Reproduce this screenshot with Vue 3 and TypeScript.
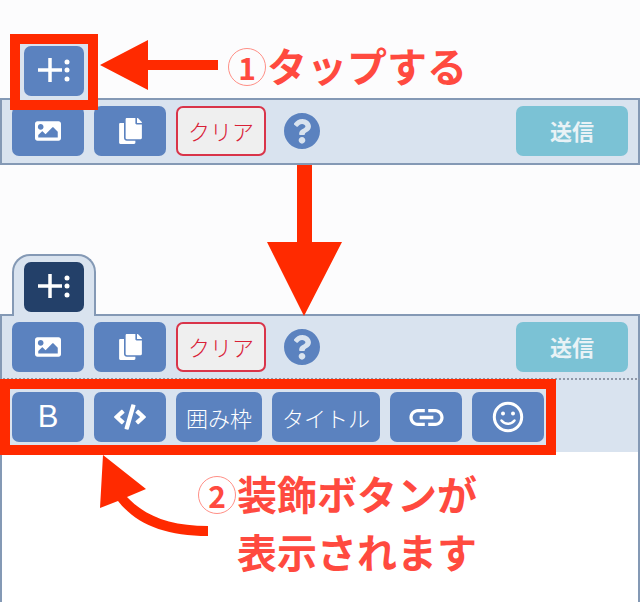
<script setup lang="ts">
interface Tool {
  label?: string
  icon?: string
  bold?: boolean
}

const imagePath = 'M464 448H48c-26.51 0-48-21.49-48-48V112c0-26.51 21.49-48 48-48h416c26.51 0 48 21.49 48 48v288c0 26.51-21.49 48-48 48zM112 120c-30.928 0-56 25.072-56 56s25.072 56 56 56 56-25.072 56-56-25.072-56-56-56zM64 384h384V272l-87.515-87.515c-4.686-4.686-12.284-4.686-16.971 0L208 320l-55.515-55.515c-4.686-4.686-12.284-4.686-16.971 0L64 336v48z'
const copyPath = 'M320 448v40c0 13.255-10.745 24-24 24H24c-13.255 0-24-10.745-24-24V120c0-13.255 10.745-24 24-24h72v296c0 30.879 25.121 56 56 56h168zm0-344V0H152c-13.255 0-24 10.745-24 24v368c0 13.255 10.745 24 24 24h272c13.255 0 24-10.745 24-24V128H344c-13.2 0-24-10.8-24-24zm120.971-31.029L375.029 7.029A24 24 0 0 0 358.059 0H352v96h96v-6.059a24 24 0 0 0-7.029-16.97z'
const helpPath = 'M504 256c0 136.997-111.043 248-248 248S8 392.997 8 256C8 119.083 119.043 8 256 8s248 111.083 248 248zM262.655 90c-54.497 0-89.255 22.957-116.549 63.758-3.536 5.286-2.353 12.415 2.715 16.258l34.699 26.31c5.205 3.947 12.621 3.008 16.665-2.122 17.864-22.658 30.113-35.797 57.303-35.797 20.429 0 45.698 13.148 45.698 32.958 0 14.976-12.363 22.667-32.534 33.976C247.128 238.528 216 254.941 216 296v4c0 6.627 5.373 12 12 12h56c6.627 0 12-5.373 12-12v-1.333c0-28.462 83.186-29.647 83.186-106.667 0-58.002-60.165-102-116.531-102zM256 338c-25.365 0-46 20.635-46 46 0 25.364 20.635 46 46 46s46-20.636 46-46c0-25.365-20.635-46-46-46z'
const codePath = 'M278.9 511.5l-61-17.7c-6.4-1.8-10-8.5-8.2-14.9L346.2 8.7c1.8-6.4 8.5-10 14.9-8.2l61 17.7c6.4 1.8 10 8.5 8.2 14.9L293.8 503.3c-1.9 6.4-8.5 10.1-14.9 8.2zm-114-112.2l43.5-46.4c4.6-4.9 4.3-12.7-.8-17.2L117 256l90.6-79.7c5.1-4.5 5.5-12.3.8-17.2l-43.5-46.4c-4.5-4.8-12.1-5.1-17-.5L3.8 247.2c-5.1 4.7-5.1 12.8 0 17.5l144.1 135.1c4.9 4.6 12.5 4.4 17-.5zm327.2.6l144.1-135.1c5.1-4.7 5.1-12.8 0-17.5L492.1 112.1c-4.8-4.5-12.4-4.3-17 .5L431.6 159c-4.6 4.9-4.3 12.7.8 17.2L523 256l-90.6 79.7c-5.1 4.5-5.5 12.3-.8 17.2l43.5 46.4c4.5 4.9 12.1 5.1 17 .6z'
const linkPath = 'M3.9 12c0-1.71 1.39-3.1 3.1-3.1h4V7H7c-2.76 0-5 2.24-5 5s2.24 5 5 5h4v-1.9H7c-1.71 0-3.1-1.39-3.1-3.1zM8 13h8v-2H8v2zm9-6h-4v1.9h4c1.71 0 3.1 1.39 3.1 3.1s-1.39 3.1-3.1 3.1h-4V17h4c2.76 0 5-2.24 5-5s-2.24-5-5-5z'

const decorations: Tool[] = [
  { label: 'B', bold: true },
  { icon: 'code' },
  { label: '囲み枠' },
  { label: 'タイトル' },
  { icon: 'link' },
  { icon: 'smile' },
]
</script>

<template>
  <div class="page">
    <section class="composer first">
      <div class="tab">
        <button type="button" class="btn plus">
          <svg width="36" height="34" viewBox="0 -2 36 34" fill="#fff">
            <rect x="2" y="12.25" width="24" height="3.5" />
            <rect x="12.25" y="2" width="3.5" height="24" />
            <circle cx="31" cy="6" r="2.5" />
            <circle cx="31" cy="14" r="2.5" />
            <circle cx="31" cy="23" r="2.5" />
          </svg>
        </button>
      </div>
      <div class="toolbar closed">
        <button type="button" class="btn">
          <svg width="26" height="26" viewBox="0 0 512 512" fill="#fff"><path :d="imagePath" /></svg>
        </button>
        <button type="button" class="btn">
          <svg width="23" height="26" viewBox="0 0 448 512" fill="#fff"><path :d="copyPath" /></svg>
        </button>
        <button type="button" class="btn clear">クリア</button>
        <svg class="help" width="36" height="36" viewBox="8 8 496 496" fill="#5b82bf"><path :d="helpPath" /></svg>
        <button type="button" class="btn send">送信</button>
      </div>
    </section>

    <section class="composer second">
      <div class="tab">
        <button type="button" class="btn plus active">
          <svg width="36" height="34" viewBox="0 -2 36 34" fill="#fff">
            <rect x="2" y="12.25" width="24" height="3.5" />
            <rect x="12.25" y="2" width="3.5" height="24" />
            <circle cx="31" cy="6" r="2.5" />
            <circle cx="31" cy="14" r="2.5" />
            <circle cx="31" cy="23" r="2.5" />
          </svg>
        </button>
      </div>
      <div class="toolbar">
        <button type="button" class="btn">
          <svg width="26" height="26" viewBox="0 0 512 512" fill="#fff"><path :d="imagePath" /></svg>
        </button>
        <button type="button" class="btn">
          <svg width="23" height="26" viewBox="0 0 448 512" fill="#fff"><path :d="copyPath" /></svg>
        </button>
        <button type="button" class="btn clear">クリア</button>
        <svg class="help" width="36" height="36" viewBox="8 8 496 496" fill="#5b82bf"><path :d="helpPath" /></svg>
        <button type="button" class="btn send">送信</button>
      </div>
      <div class="decorations">
        <button
          v-for="(tool, i) in decorations"
          :key="i"
          type="button"
          class="btn"
          :class="{ wide: tool.label && !tool.bold, letter: tool.bold }"
        >
          <template v-if="tool.label">{{ tool.label }}</template>
          <svg v-else-if="tool.icon === 'code'" width="32" height="26" viewBox="0 0 640 512" fill="#fff"><path :d="codePath" /></svg>
          <svg v-else-if="tool.icon === 'link'" width="41" height="41" viewBox="0 0 24 24" fill="#fff"><path :d="linkPath" /></svg>
          <svg v-else width="32" height="32" viewBox="0 0 32 32" fill="none" stroke="#fff">
            <circle cx="16" cy="16" r="13.7" stroke-width="3" />
            <circle cx="11" cy="12.5" r="2" fill="#fff" stroke="none" />
            <circle cx="21" cy="12.5" r="2" fill="#fff" stroke="none" />
            <path d="M9.5 19.5c3.5 4.4 9.5 4.4 13 0" stroke-width="2.4" stroke-linecap="round" />
          </svg>
        </button>
      </div>
      <div class="editor"></div>
    </section>

    <div class="frame frame-tap"></div>
    <div class="frame frame-tools"></div>

    <svg class="arrows" width="640" height="602" viewBox="0 0 640 602" fill="#ff2a00">
      <path d="M100 65 148 40V60H218V70H148V90Z" />
      <path d="M297 165H312V242H342L304 316 267 242H297Z" />
      <path d="M103 455 146 489 127 497C145 516 170 526 208 526V536C165 536 136 524 118 501L100 508Z" />
    </svg>

    <p class="note note-tap"><span class="num">1</span>タップする</p>
    <p class="note note-show"><span class="num">2</span>装飾ボタンが<br /><span class="indent">表示されます</span></p>
  </div>
</template>

<style scoped>
.page {
  position: relative;
  display: flex;
  flex-direction: column;
  width: 640px;
  height: 602px;
  overflow: hidden;
  background: #fcfcfd;
  font-family: "Noto Sans CJK JP", "Noto Sans", sans-serif;
}

.composer.first {
  padding-top: 38px;
}

.composer.second {
  display: flex;
  flex: 1;
  flex-direction: column;
  margin-top: 89px;
}

.tab {
  position: relative;
  z-index: 1;
  box-sizing: border-box;
  width: 84px;
  height: 62px;
  margin: 0 0 -2px 12px;
  padding: 6px 10px 0;
  background: #d9e3ef;
  border: 2px solid #8499b5;
  border-bottom: none;
  border-radius: 18px 18px 0 0;
}

.toolbar {
  display: flex;
  gap: 10px;
  align-items: center;
  padding: 6px 10px;
  background: #d9e3ef;
  border: 2px solid #8499b5;
  border-bottom: 2px dotted #8f98a8;
}

.toolbar.closed {
  padding-bottom: 7px;
  border-bottom: 2px solid #8499b5;
}

.decorations {
  display: flex;
  gap: 10px;
  padding: 12px 10px 10px;
  background: #d9e3ef;
  border: solid #8499b5;
  border-width: 0 2px;
}

.editor {
  flex: 1;
  background: #fff;
  border: solid #8499b5;
  border-width: 0 2px;
}

.btn {
  display: flex;
  align-items: center;
  justify-content: center;
  box-sizing: border-box;
  flex: none;
  width: 72px;
  height: 50px;
  padding: 0;
  color: #fff;
  font-family: inherit;
  font-size: 22px;
  font-weight: 300;
  background: #5b82bf;
  border: none;
  border-radius: 7px;
}

.btn.plus {
  width: 60px;
}

.btn.active {
  background: #234069;
}

.btn.wide {
  width: auto;
  padding: 0 10px 1px;
}

.btn.letter {
  font-family: "Liberation Sans", sans-serif;
  font-size: 31px;
}

.btn.clear {
  width: 90px;
  padding-bottom: 2px;
  color: #d92036;
  background: #efefef;
  border: 2px solid #d9344a;
}

.btn.send {
  width: 112px;
  margin-left: auto;
  padding-bottom: 2px;
  color: #e9f2f6;
  font-weight: 700;
  background: #7bc2d5;
}

.help {
  flex: none;
  margin-left: 8px;
}

.frame {
  position: absolute;
  z-index: 2;
  box-sizing: border-box;
  border: 10px solid #ff2a00;
}

.frame-tap {
  top: 34px;
  left: 10px;
  width: 88px;
  height: 76px;
}

.frame-tools {
  top: 379px;
  left: 0;
  width: 556px;
  height: 76px;
}

.arrows {
  position: absolute;
  z-index: 2;
  top: 0;
  left: 0;
}

.note {
  position: absolute;
  z-index: 2;
  margin: 0;
  color: #ff4a3f;
  font-size: 40px;
  font-weight: 700;
  line-height: 58px;
  white-space: nowrap;
}

.num {
  display: inline-flex;
  align-items: center;
  justify-content: center;
  box-sizing: border-box;
  width: 38px;
  height: 38px;
  margin: 0 1px;
  font-size: 30px;
  line-height: 1;
  vertical-align: 2px;
  border: 1.5px solid #ff8f86;
  border-radius: 50%;
}

.note-tap {
  top: 36px;
  left: 227px;
}

.note-show {
  top: 464px;
  left: 197px;
}

.indent {
  padding-left: 40px;
}
</style>
